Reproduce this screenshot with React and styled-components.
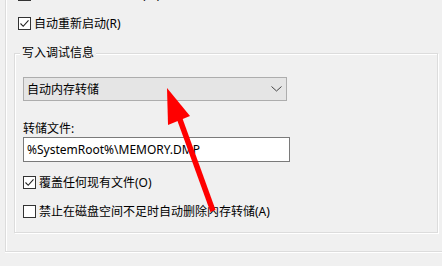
import React from 'react';
import styled, { createGlobalStyle } from 'styled-components';

const GlobalStyle = createGlobalStyle`
  html, body {
    margin: 0;
    padding: 0;
    width: 442px;
    height: 266px;
    overflow: hidden;
    background: #f0f0f0;
  }
`;

const Page = styled.div`
  position: relative;
  width: 442px;
  height: 266px;
  overflow: hidden;
  background: #f0f0f0;
  color: #000;
  font-family: 'Noto Sans', 'Noto Sans CJK SC', sans-serif;
  font-size: 12px;
`;

// tab page, its top edge is above the crop
const Panel = styled.div`
  box-sizing: border-box;
  height: 252px;
  margin-left: 5px;
  border-left: 1px solid #dcdcdc;
  border-bottom: 1px solid #dcdcdc;
  box-shadow: inset 1px 0 0 #fff, 0 1px 0 #fff;
  display: flex;
  flex-direction: column;
`;

const CheckRow = styled.label`
  display: flex;
  align-items: center;
  gap: 3px;
  height: 15px;
  line-height: 15px;
  white-space: nowrap;
  margin-top: ${(p) => p.$top || 0}px;
  padding-left: ${(p) => p.$indent || 0}px;
`;

const Box = styled.span`
  box-sizing: border-box;
  width: 13px;
  height: 13px;
  border: 1px solid #333;
  background: #fff;
  display: flex;
  align-items: center;
  justify-content: center;
  flex-shrink: 0;
`;

const Group = styled.fieldset`
  box-sizing: border-box;
  width: 424px;
  margin: 14px 0 0 8px;
  padding: 16px 0 13px 8px;
  border: 1px solid #dcdcdc;
  box-shadow: inset 1px 1px 0 #fff, 1px 1px 0 #fff;
  min-inline-size: 0;
  display: flex;
  flex-direction: column;
`;

const GroupTitle = styled.legend`
  padding: 0 2px;
  margin-left: -3px;
  line-height: 16px;
  background: #f0f0f0;
`;

const Combo = styled.div`
  box-sizing: border-box;
  width: 264px;
  height: 24px;
  border: 1px solid #adadad;
  background: #e5e5e5;
  display: flex;
  align-items: center;
  justify-content: space-between;
  padding: 0 4px 0 3px;
`;

const FieldLabel = styled.div`
  margin-top: 20px;
  line-height: 16px;
`;

const TextBox = styled.div`
  box-sizing: border-box;
  width: 267px;
  height: 25px;
  border: 1px solid #7a7a7a;
  background: #fff;
  display: flex;
  align-items: center;
  padding: 0 3px;
  white-space: nowrap;
`;

const Arrow = styled.svg`
  position: absolute;
  left: 0;
  top: 0;
  pointer-events: none;
`;

const Check = ({ checked }) => (
  <Box>
    {checked && (
      <svg width="11" height="11" viewBox="0 0 11 11">
        <polyline points="1.5,5.5 4.2,8.3 9.5,2.3" fill="none" stroke="#222" strokeWidth="1.1" />
      </svg>
    )}
  </Box>
);

const App = () => (
  <Page>
    <GlobalStyle />
    <Panel>
      <CheckRow $top={-13} $indent={12}>
        <Check checked />
        将事件写入系统日志(W)
      </CheckRow>
      <CheckRow $top={14} $indent={12}>
        <Check checked />
        自动重新启动(R)
      </CheckRow>
      <Group>
        <GroupTitle>写入调试信息</GroupTitle>
        <Combo>
          <span>自动内存转储</span>
          <svg width="11" height="6" viewBox="0 0 11 6">
            <polyline points="0.5,0.5 5.5,5 10.5,0.5" fill="none" stroke="#444" strokeWidth="1" />
          </svg>
        </Combo>
        <FieldLabel>转储文件:</FieldLabel>
        <TextBox>%SystemRoot%\MEMORY.DMP</TextBox>
        <CheckRow $top={13}>
          <Check checked />
          覆盖任何现有文件(O)
        </CheckRow>
        <CheckRow $top={14}>
          <Check />
          禁止在磁盘空间不足时自动删除内存转储(A)
        </CheckRow>
      </Group>
    </Panel>
    <Arrow width="442" height="266" viewBox="0 0 442 266">
      <polygon points="167,88 168,125 190,116" fill="#ff0000" />
      <line x1="179" y1="117" x2="213" y2="211" stroke="#ff0000" strokeWidth="5.5" />
    </Arrow>
  </Page>
);

export default App;
